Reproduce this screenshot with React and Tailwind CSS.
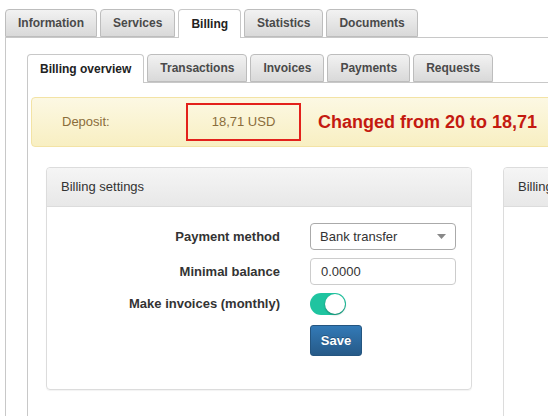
const topTabs = ['Information', 'Services', 'Billing', 'Statistics', 'Documents'];
const subTabs = ['Billing overview', 'Transactions', 'Invoices', 'Payments', 'Requests'];

function Tab({ label, active }) {
  return (
    <li
      className={
        active
          ? '-mb-px flex h-[29px] shrink-0 items-center rounded-t-[4px] border border-b-0 border-[#c8c8c8] bg-white px-[12px] text-[12px] font-bold text-[#222]'
          : 'flex h-[28px] shrink-0 items-center rounded-t-[4px] border border-[#bdbdbd] bg-gradient-to-b from-[#f2f2f2] to-[#d9d9d9] px-[12px] text-[12px] font-bold text-[#4a4a4a]'
      }
    >
      {label}
    </li>
  );
}

function TabBar({ tabs, active }) {
  return (
    <ul className="flex items-end gap-[3px] border-b border-[#c8c8c8]">
      {tabs.map((t) => (
        <Tab key={t} label={t} active={t === active} />
      ))}
    </ul>
  );
}

function Field({ label, children }) {
  return (
    <div className="flex items-center">
      <div className="w-[233px] text-right text-[13px] font-bold text-[#333]">{label}</div>
      <div className="ml-[30px] w-[146px]">{children}</div>
    </div>
  );
}

function PanelHeader({ children }) {
  return (
    <div className="flex h-[39px] items-center whitespace-nowrap rounded-t-[4px] border-b border-[#dcdcdc] bg-gradient-to-b from-[#f5f5f5] to-[#e8e8e8] pl-[14px] text-[13px] text-[#333]">
      {children}
    </div>
  );
}

export default function App() {
  return (
    <div className="h-[416px] w-[548px] overflow-hidden bg-white font-['Liberation_Sans',Arial,sans-serif]">
      <div className="pl-[5px] pt-[9px]">
        <TabBar tabs={topTabs} active="Billing" />
        <div className="h-[400px] border-l border-[#c8c8c8] pl-[21px] pt-[16px]">
          <TabBar tabs={subTabs} active="Billing overview" />
          <div className="h-[360px] border-l border-[#c8c8c8] pt-[14px]">
            <div className="ml-[3px] flex h-[50px] w-[560px] items-center rounded-[4px] border border-[#f3e3a5] bg-gradient-to-b from-[#fcf8e3] to-[#f8efc2] pl-[30px]">
              <span className="w-[124px] shrink-0 text-[13px] text-[#8a6d3b]">Deposit:</span>
              <span className="flex h-[38px] w-[115px] shrink-0 items-center justify-center border-2 border-[#e3211b] text-[13px] text-[#8a6d3b]">
                18,71 USD
              </span>
              <span className="ml-[17px] whitespace-nowrap text-[18px] font-bold text-[#c41a10]">
                Changed from 20 to 18,71
              </span>
            </div>

            <div className="ml-[18px] mt-[20px] flex items-start gap-[31px]">
              <div className="w-[426px] shrink-0 rounded-[4px] border border-[#dcdcdc] shadow-[0_1px_1px_rgba(0,0,0,0.05)]">
                <PanelHeader>Billing settings</PanelHeader>
                <div className="flex flex-col gap-[8px] pb-[33px] pt-[16px]">
                  <Field label="Payment method">
                    <div className="flex h-[27px] items-center justify-between rounded-[4px] border border-[#aaa] bg-white pl-[9px] pr-[9px] text-[13px] text-[#333]">
                      <span>Bank transfer</span>
                      <svg width="9" height="5" viewBox="0 0 9 5">
                        <path d="M0 0h9L4.5 5z" fill="#888" />
                      </svg>
                    </div>
                  </Field>
                  <Field label="Minimal balance">
                    <div className="flex h-[27px] items-center rounded-[4px] border border-[#ccc] bg-white pl-[10px] text-[13px] text-[#333]">
                      0.0000
                    </div>
                  </Field>
                  <Field label="Make invoices (monthly)">
                    <div className="relative h-[22px] w-[36px] rounded-full bg-[#1fc4a0]">
                      <div className="absolute right-[1px] top-[1px] h-[20px] w-[20px] rounded-full bg-white shadow-[0_1px_2px_rgba(0,0,0,0.35)]" />
                    </div>
                  </Field>
                  <Field label="">
                    <button className="mt-[2px] h-[31px] w-[52px] rounded-[3px] border border-[#245580] bg-gradient-to-b from-[#337ab7] to-[#265a88] text-[13px] font-bold text-white [text-shadow:0_-1px_0_rgba(0,0,0,0.25)]">
                      Save
                    </button>
                  </Field>
                </div>
              </div>
              <div className="h-[300px] w-[200px] shrink-0 rounded-[4px] border border-[#dcdcdc]">
                <PanelHeader>Billing info</PanelHeader>
              </div>
            </div>
          </div>
        </div>
      </div>
    </div>
  );
}
